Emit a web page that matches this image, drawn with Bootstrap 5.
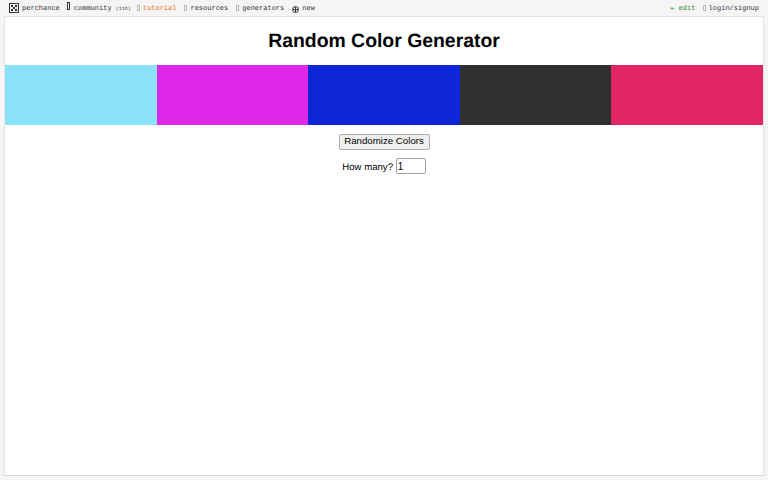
<!DOCTYPE html>
<html lang="en">
<head>
  <title>Random Color Generator</title>
  <meta charset="utf-8">
  <link href="https://cdn.jsdelivr.net/npm/bootstrap@5.3.0/dist/css/bootstrap.min.css" rel="stylesheet">
  <style>
    html, body { height: 100%; }
    body {
      background: #f5f5f5;
      font-family: "Liberation Sans", Arial, sans-serif;
      color: #000;
      overflow: hidden;
      text-rendering: geometricPrecision;
    }
    .page-shell { height: 480px; padding: 0 4px 4px 4px; }

    /* top bar */
    .top-bar {
      height: 16px;
      padding: 2px 5px 0 5px;
      font-family: "Liberation Mono", "DejaVu Sans Mono", monospace;
      font-size: 7px;
      line-height: 14px;
      color: #333;
      white-space: nowrap;
    }
    .top-bar a { color: #333; text-decoration: none; }
    .top-bar a.tut-link { color: #e8701a; }
    .top-bar a.edit-link { color: #1f8a1f; }
    .nav-gap { margin-left: 7px; }
    .nav-gap-wide { margin-left: 8px; }
    .nav-gap-tight { margin-left: 3px; }
    .count-tag { font-size: 5px; margin-right: -1px; }
    .tofu {
      display: inline-block;
      width: 3px;
      height: 6px;
      border: 1px solid #bbb;
      margin-right: 3px;
      vertical-align: -1px;
    }
    .tofu-dark { height: 8px; border-color: #333; margin-right: 4px; vertical-align: 0; }

    /* main panel */
    .main-panel {
      height: 460px;
      background: #fff;
      border: 1px solid #e4e4e4;
      border-bottom-color: #d4d4d4;
    }
    .main-title {
      font-size: 19.4px;
      font-weight: 700;
      line-height: 23px;
      margin: 0;
      padding: 13px 0 12px;
    }
    .swatch { height: 60px; flex: 1 1 0; }
    .rand-btn {
      display: block;
      margin: 9px auto 0;
      width: 91px;
      height: 16px;
      padding: 0 0 2px;
      font-size: 9.7px;
      line-height: 12px;
      white-space: nowrap;
      background: #efefef;
      border: 1px solid #b0b0b0;
      border-radius: 2px;
      color: #000;
    }
    .count-row { margin-top: 8px; font-size: 9.6px; line-height: 17px; white-space: nowrap; }
    .count-row input {
      width: 30px;
      height: 16px;
      padding: 0 1px;
      margin-bottom: 2px;
      font-size: 10px;
      border: 1px solid #a0a0a0;
      border-radius: 2px;
      vertical-align: middle;
    }
  </style>
</head>
<body>
<div class="page-shell">
  <!-- Top bar -->
  <div class="top-bar d-flex justify-content-between">
    <div class="d-flex align-items-center">
      <svg width="10" height="10" viewBox="0 0 10 10" style="margin:0 3px 3px 0">
        <rect x="0.5" y="0.5" width="9" height="9" fill="none" stroke="#333"/>
        <rect x="2" y="2" width="2" height="2" fill="#333"/>
        <rect x="6" y="2" width="2" height="2" fill="#333"/>
        <rect x="4" y="4" width="2" height="2" fill="#333"/>
        <rect x="2" y="6" width="2" height="2" fill="#333"/>
        <rect x="6" y="6" width="2" height="2" fill="#333"/>
      </svg>
      <a href="#">perchance</a>
      <span class="nav-gap"><span class="tofu tofu-dark"></span><a href="#">community</a> <span class="count-tag">(11h)</span></span>
      <span class="nav-gap"><span class="tofu"></span><a href="#" class="tut-link">tutorial</a></span>
      <span class="nav-gap-wide"><span class="tofu"></span><a href="#">resources</a></span>
      <span class="nav-gap-wide"><span class="tofu"></span><a href="#">generators</a></span>
      <span class="nav-gap-wide d-inline-flex align-items-center">
        <svg width="7" height="7" viewBox="0 0 7 7" style="margin-right:3px">
          <circle cx="3.5" cy="3.5" r="3" fill="none" stroke="#333"/>
          <path d="M3.5 1V6M1 3.5H6" stroke="#333"/>
        </svg>
        <a href="#">new</a>
      </span>
    </div>
    <div>
      <a href="#" class="edit-link">✏ edit</a>
      <span class="nav-gap-tight"><span class="tofu"></span><a href="#">login/signup</a></span>
    </div>
  </div>

  <!-- Generator panel -->
  <div class="main-panel text-center">
    <h1 class="main-title">Random Color Generator</h1>
    <div class="d-flex" id="swatches"></div>
    <button type="button" class="rand-btn" id="randBtn">Randomize Colors</button>
    <div class="count-row">How many? <input type="text" id="howMany" value="1"></div>
  </div>
</div>

<script src="https://cdn.jsdelivr.net/npm/bootstrap@5.3.0/dist/js/bootstrap.bundle.min.js"></script>
<script>
  const colors = ["#8be0fa", "#dd28e8", "#0c26d8", "#303030", "#e22563"];
  const swatches = document.getElementById("swatches");
  colors.forEach((c) => {
    const d = document.createElement("div");
    d.className = "swatch";
    d.style.background = c;
    swatches.appendChild(d);
  });
</script>
</body>
</html>
